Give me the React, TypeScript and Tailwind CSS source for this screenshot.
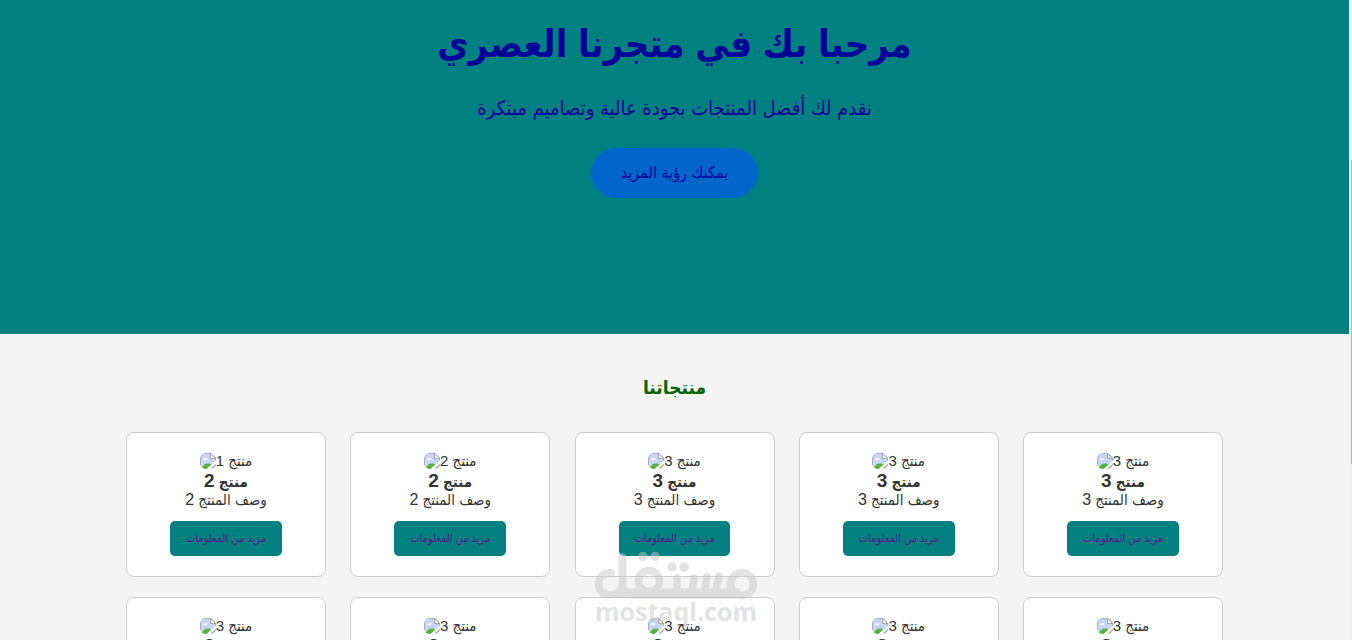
import React from "react";

const products = [
  { alt: "منتج 1", title: "منتج", number: 2 },
  { alt: "منتج 2", title: "منتج", number: 2 },
  { alt: "منتج 3", title: "منتج", number: 3 },
  { alt: "منتج 3", title: "منتج", number: 3 },
  { alt: "منتج 3", title: "منتج", number: 3 },
  { alt: "منتج 3", title: "منتج", number: 3 },
  { alt: "منتج 3", title: "منتج", number: 3 },
  { alt: "منتج 3", title: "منتج", number: 3 },
  { alt: "منتج 3", title: "منتج", number: 3 },
  { alt: "منتج 3", title: "منتج", number: 3 },
];

const MissingImage = () => (
  <svg width="16" height="16" viewBox="0 0 16 16" className="shrink-0 rounded-[6px]">
    <path d="M0 0h11l5 5v11H0z" fill="#c4d5f5" />
    <path d="M3 7c-.3-1.500 1-2 1.700-1.300.6-1.200 2.300-.8 2.300.5.8 0 .8.8.2.8z" fill="#fff" />
    <path d="M1.500 16c.8-3.500 3.500-5.500 6.500-5.500 1.500 0 3 .5 3.500 1.500L7.500 16z" fill="#5aae3c" />
    <path d="M.5 16V5A4.500 4.500 0 0 1 5 .5h6l4.500 4.500v11" fill="none" stroke="#b0b0b4" />
    <path d="M10.500 .5v5h5z" fill="#fff" stroke="#a6a6a6" />
    <path d="M16 7.500v3L10.500 16h-4z" fill="#fff" />
    <path d="M15.500 11.500v4h-4z" fill="#8cc67c" stroke="#a6a6a6" />
  </svg>
);

const ProductCard = ({ alt, title, number }: { alt: string; title: string; number: number }) => {
  return (
    <article className="flex flex-col items-center rounded-lg border border-[#ccc] bg-white p-5 text-[#333]">
      <div className="flex h-[18px] items-start text-base">
        <MissingImage />
        <span className="text-[15px] leading-4">{alt}</span>
      </div>
      <h3 className="h-5 text-[15px] font-bold leading-5">
        {title} <span className="text-[19px]">{number}</span>
      </h3>
      <p className="h-[18px] text-[15px] leading-[18px]">
        وصف المنتج <span className="text-base leading-[18px]">{number}</span>
      </p>
      <a
        href="#more"
        className="mt-3 rounded-[5px] bg-[#008080] px-4 text-[11px] leading-[35px] text-[#551a8b]"
      >
        مزيد من المعلومات
      </a>
    </article>
  );
};

const Watermark = () => (
  <div className="pointer-events-none absolute inset-x-0 top-[550px] flex flex-col items-center text-[#c8c8c8] opacity-50">
    <svg width="164" height="51" viewBox="0 0 164 51" fill="none" stroke="currentColor" strokeWidth="7.500">
      <path
        d="M17 22.500C9 22.500 4.500 28 4.500 34S9 45 16 45C24 45 28.500 41 28.500 34V7M28.500 34C28.500 41 33 45 40 45H146"
        strokeLinecap="round"
      />
      <circle cx="55" cy="31" r="10.500" />
      <path d="M83 28v16M100 28l-2 16M113 27l-3 17M125 26l-4 18" strokeLinecap="round" />
      <path d="M24 43.500H146" strokeWidth="10" />
      <circle cx="148" cy="34" r="11.500" />
      <g fill="currentColor" stroke="none">
        <circle cx="49" cy="6.500" r="4.700" />
        <circle cx="61" cy="6.500" r="4.700" />
        <circle cx="78" cy="17" r="4.700" />
        <circle cx="90" cy="17" r="4.700" />
      </g>
    </svg>
    <span className="font-['Open_Sans',sans-serif] text-[25px] font-bold leading-[20px]">mostaql.com</span>
  </div>
);

const App = () => {
  return (
    <div className="relative flex h-screen overflow-hidden bg-[#f4f4f4] font-['Liberation_Sans','DejaVu_Sans_Condensed','DejaVu_Sans',sans-serif]">
      <main className="min-w-0 flex-1">
        <header className="flex h-[334px] flex-col items-center bg-[#008080] pt-4 text-[#000099]">
          <h1 className="text-[38px] font-bold leading-[56px]">مرحبا بك في متجرنا العصري</h1>
          <p className="mt-5 text-xl leading-8">نقدم لك أفضل المنتجات بجودة عالية وتصاميم مبتكرة</p>
          <button className="mt-6 rounded-full bg-[#0066cc] px-[30px] text-base leading-[50px]">
            يمكنك رؤية المزيد
          </button>
        </header>

        <section className="pt-10">
          <h2 className="text-center text-[19px] font-bold leading-[28px] text-[#006400]">منتجاتنا</h2>
          <div className="mx-auto mt-[30px] grid max-w-[1097px] grid-cols-[repeat(5,200px)] justify-between gap-y-5">
            {products.map((product, i) => (
              <ProductCard key={i} {...product} />
            ))}
          </div>
        </section>
      </main>

      {/* scroll track */}
      <div className="flex w-[3px] flex-col items-end bg-[#f1f1f1] pt-40">
        <div className="h-[304px] w-px bg-[#b4b4b4]" />
      </div>

      <Watermark />
    </div>
  );
};

export default App;
